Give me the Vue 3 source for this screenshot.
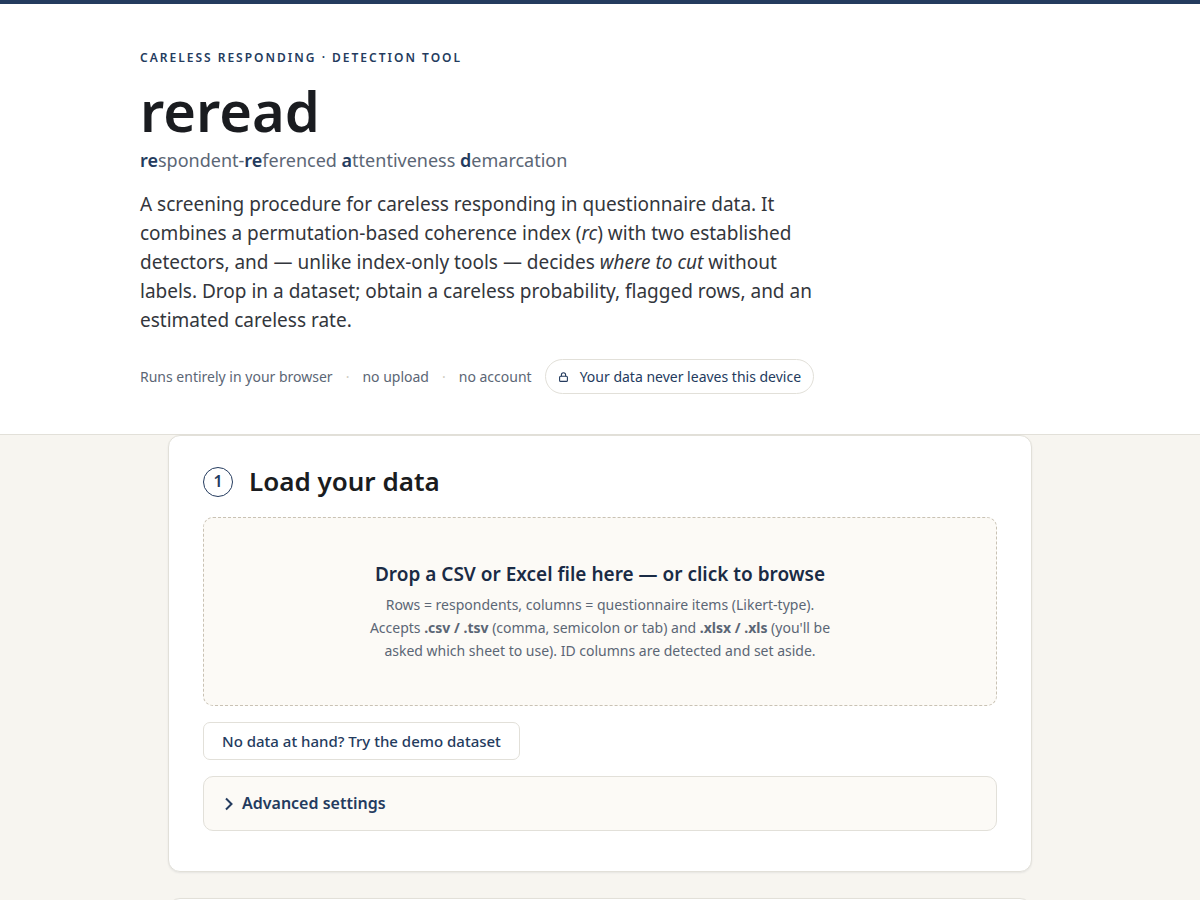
<script setup>
const facts = ['Runs entirely in your browser', 'no upload', 'no account']
</script>

<template>
  <div class="page">
    <header class="masthead">
      <div class="masthead-inner">
        <p class="eyebrow">Careless responding · detection tool</p>
        <h1>reread</h1>
        <p class="tagline"><b>re</b>spondent-<b>re</b>ferenced <b>a</b>ttentiveness <b>d</b>emarcation</p>
        <p class="lede">
          A screening procedure for careless responding in questionnaire data. It combines a
          permutation-based coherence index (<em>rc</em>) with two established detectors, and —
          unlike index-only tools — decides <em>where to cut</em> without labels. Drop in a
          dataset; obtain a careless probability, flagged rows, and an estimated careless rate.
        </p>
        <div class="meta">
          <template v-for="(fact, i) in facts" :key="fact">
            <span v-if="i" class="dot">·</span>
            <span>{{ fact }}</span>
          </template>
          <span class="pill">
            <svg class="lock" viewBox="0 0 12 12" aria-hidden="true">
              <rect x="1.6" y="5.3" width="7.8" height="5.1" rx="1" />
              <path d="M3.4 5.3V3.8a2.1 2.1 0 0 1 4.2 0v1.5" />
            </svg>
            Your data never leaves this device
          </span>
        </div>
      </div>
    </header>

    <main>
      <section class="card">
        <h2><span class="num">1</span>Load your data</h2>
        <label class="drop" for="data-file">
          <input id="data-file" class="file" type="file" accept=".csv,.tsv,.xlsx,.xls" />
          <span class="drop-title">Drop a CSV or Excel file here — or click to browse</span>
          <span class="drop-hint">
            Rows = respondents, columns = questionnaire items (Likert-type). Accepts
            <strong>.csv / .tsv</strong> (comma, semicolon or tab) and
            <strong>.xlsx / .xls</strong> (you'll be asked which sheet to use). ID columns are
            detected and set aside.
          </span>
        </label>
        <button class="demo" type="button">No data at hand? Try the demo dataset</button>
        <details class="advanced">
          <summary>
            <svg class="chevron" viewBox="0 0 10 14" aria-hidden="true">
              <path d="M2 1.5 7.5 7 2 12.5" />
            </svg>
            Advanced settings
          </summary>
        </details>
      </section>
      <section class="card"></section>
    </main>
  </div>
</template>

<style>
body {
  background: #f7f5f0;
}
html {
  scrollbar-width: none;
}
</style>

<style scoped>
.page {
  font-family: "Noto Sans", sans-serif;
  color: #1a1c20;
}
.masthead {
  background: #fff;
  border-top: 4px solid #243b5e;
  border-bottom: 1px solid #e2e0d9;
}
.masthead-inner {
  max-width: 920px;
  margin: 0 auto;
  padding: 44px 28px 40px;
}
@media (min-width: 960px) {
  .masthead-inner {
    padding-left: 0;
    padding-right: 0;
  }
}
.eyebrow {
  margin: 0;
  font-size: 12px;
  line-height: 20px;
  font-weight: 600;
  letter-spacing: 2px;
  text-transform: uppercase;
  color: #243b5e;
}
h1 {
  margin: 13px 0 0;
  font-size: 56px;
  line-height: 58px;
  font-weight: 600;
}
.tagline {
  margin: 7px 0 0;
  font-size: 18px;
  line-height: 28px;
  color: #5b6675;
}
.tagline b {
  font-weight: 600;
  color: #243b5e;
}
.lede {
  max-width: 680px;
  margin: 16px 0 0;
  font-size: 19px;
  line-height: 29px;
  color: #33363c;
}
.meta {
  display: flex;
  flex-wrap: wrap;
  align-items: center;
  gap: 13px;
  margin-top: 24px;
  font-size: 14px;
  line-height: 23px;
  color: #5b6675;
}
.dot {
  color: #cfccc2;
}
.pill {
  display: inline-flex;
  align-items: center;
  gap: 10px;
  padding: 5px 12px;
  border: 1px solid #e2e0d9;
  border-radius: 20px;
  color: #243b5e;
}
.lock {
  width: 12px;
  height: 12px;
  fill: none;
  stroke: currentColor;
  stroke-width: 1.1;
}
main {
  max-width: 864px;
  margin: 0 auto;
}
.card {
  box-sizing: border-box;
  margin-bottom: 26px;
  padding: 28px 34px 40px;
  background: #fff;
  border: 1px solid #e2e0d9;
  border-radius: 12px;
  box-shadow: 0 1px 2px rgba(30, 40, 60, 0.08);
}
h2 {
  display: flex;
  align-items: center;
  gap: 16px;
  margin: 0 0 18px;
  font-size: 26px;
  line-height: 35px;
  font-weight: 600;
}
.num {
  display: inline-flex;
  align-items: center;
  justify-content: center;
  box-sizing: border-box;
  width: 30px;
  height: 30px;
  border: 1px solid #243b5e;
  border-radius: 50%;
  font-size: 16px;
  color: #243b5e;
}
.drop {
  position: relative;
  display: flex;
  flex-direction: column;
  align-items: center;
  padding: 40px 20px 43px;
  border: 1px dashed #c9c2b4;
  border-radius: 10px;
  background: #fcfaf6;
  text-align: center;
  cursor: pointer;
}
.file {
  position: absolute;
  inset: 0;
  opacity: 0;
  cursor: pointer;
}
.drop-title {
  font-size: 19px;
  line-height: 32px;
  font-weight: 600;
  color: #1a2b45;
}
.drop-hint {
  max-width: 480px;
  margin-top: 3px;
  font-size: 14px;
  line-height: 23px;
  color: #5b6675;
}
.demo {
  margin-top: 16px;
  padding: 7px 18px;
  border: 1px solid #e2e0d9;
  border-radius: 7px;
  background: #fff;
  font-family: inherit;
  font-size: 15px;
  line-height: 22px;
  font-weight: 500;
  color: #243b5e;
}
.advanced {
  margin-top: 16px;
  border: 1px solid #e2e0d9;
  border-radius: 10px;
  background: #fcfaf6;
}
summary {
  display: flex;
  align-items: center;
  gap: 8px;
  padding: 13px 20px;
  font-size: 16px;
  line-height: 27px;
  font-weight: 600;
  color: #243b5e;
  cursor: pointer;
}
.chevron {
  width: 10px;
  height: 14px;
  fill: none;
  stroke: currentColor;
  stroke-width: 2;
}
</style>
